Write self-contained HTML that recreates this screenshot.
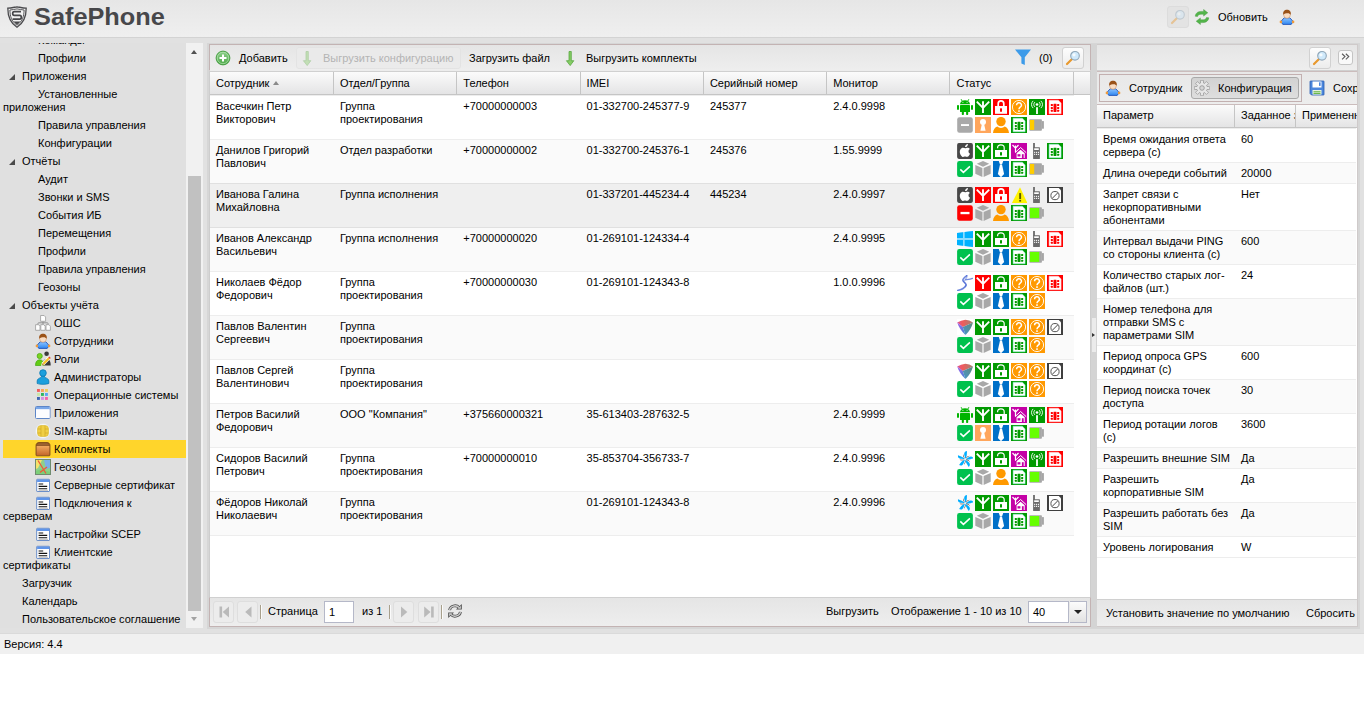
<!DOCTYPE html>
<html lang="ru"><head><meta charset="utf-8"><title>SafePhone</title>
<style>
html,body{margin:0;padding:0;background:#fff;overflow:hidden}
body{width:1366px;height:728px;position:relative;font-family:"Liberation Sans",sans-serif;font-size:11px;line-height:13px;color:#000}
*{box-sizing:border-box}
.abs{position:absolute}
.i16{width:16px;height:16px;display:inline-block;overflow:hidden;vertical-align:top}
.txt{white-space:nowrap;line-height:13px}
#hdr{position:absolute;left:0;top:0;width:1364px;height:38px;background:linear-gradient(#e6e6e6,#efefef);border-bottom:1px solid #d3d3d3;z-index:2}
#logo{position:absolute;left:7px;top:6px}
#brand{position:absolute;left:34px;top:2px;font-weight:bold;font-size:24px;line-height:30px;color:#47474a;white-space:nowrap;transform:scaleX(1.055);transform-origin:0 0}
#main{position:absolute;left:0;top:37px;width:1364px;height:596px;background:#e1e1e1}
#frame{position:absolute;left:207px;top:6px;width:1153px;height:586px;background:#d6d6d6}
#tree{position:absolute;left:0;top:6px;width:186px;height:585px;overflow:hidden;background:#e0e0e0}
#tree .tn:first-child{margin-top:-12px}
.tn{margin-left:3px;padding:3px 0 2px 0;line-height:13px;white-space:nowrap;margin-right:0}
.tn.sel{background:#ffd52b}
.sp{display:inline-block;width:16px;height:16px;margin:-2px 0 -1px;vertical-align:top;position:relative}
.ti{margin:-2px 0 -1px;vertical-align:top}
.tt{padding-left:3px;white-space:pre}
.tt.clip{display:inline-block;vertical-align:top;max-width:124px;overflow:hidden;height:13px}
.exp{position:absolute;left:6px;top:6px;width:0;height:0;border-style:solid;border-width:0 0 6px 6px;border-color:transparent transparent #4a4a4a transparent}
#tscroll{position:absolute;left:186px;top:6px;width:17px;height:585px;background:#f1f1f1}
#tscroll .thumb{position:absolute;left:2px;top:133px;width:13px;height:435px;background:#c1c1c1}
#tscroll .up{position:absolute;left:5px;top:7px;border:solid transparent;border-width:0 3.5px 4px;border-bottom-color:#505050}
#tscroll .down{position:absolute;left:5px;top:574px;border:solid transparent;border-width:4px 3.5px 0;border-top-color:#a3a3a3}

#center{position:absolute;left:209px;top:7px;width:882px;height:583px;background:#fff;border:1px solid #cdcdcd}
#right{position:absolute;left:1097px;top:7px;width:261px;height:583px;background:#fff;border:1px solid #cfcaca;border-left:0;overflow:hidden}
#split{position:absolute;left:1091px;top:7px;width:6px;height:584px;background:#d4d4d4}
#split b{position:absolute;left:1px;top:274px;width:4px;height:34px;background:#ebebeb}
#split i{position:absolute;left:1px;top:289px;border:solid transparent;border-width:2.5px 0 2.5px 3px;border-left-color:#333}

.tb{position:absolute;left:0;width:100%;background:linear-gradient(#e5e5e5,#eee)}
#ctb{top:-1px;left:-1px;width:882px;height:27px;border:1px solid #c3b3b3;border-bottom-color:#ececec}
.btn{position:absolute;width:22px;height:22px;border:1px solid #d1d1d1;border-radius:3px;background:linear-gradient(#fdfdfd,#ececec);padding:2px}
.btn.dis{background:#e3e3e3;border-color:#dcdcdc}
.dbtn{border:1px solid #e3e3e3;border-radius:3px;background:#ebebeb;opacity:.9}
.pbtn{position:absolute;border:1px solid #a9a9a9;border-radius:3px;background:linear-gradient(#d2d2d2,#dedede)}
.cbtn{position:absolute;width:15px;height:15px;border:1px solid #c4c4c4;border-radius:3px;background:#f9f9f9}
.cbtn span{position:relative;top:-1px}

.gh{position:absolute;left:0;width:100%;height:24px;background:linear-gradient(#fbfbfb,#e4e4e5);border-bottom:1px solid #c5c5c5;white-space:nowrap;overflow:hidden;font-size:0}
#cgh{top:26px;border-top:1px solid #d0d0d0}
.hc{display:inline-block;vertical-align:top;width:123.286px;height:23px;border-right:1px solid #c5c5c5;padding:5px 0 0 6px;font-size:11px;line-height:13px;overflow:hidden;white-space:nowrap;position:relative}
#cgh .hc{width:123.3px}
.sort{display:inline-block;margin-left:4px;border:solid transparent;border-width:0 3.5px 4px;border-bottom-color:#8a8a8a;position:relative;top:-2px}
#cbody{position:absolute;left:0;top:50px;width:863.8px;height:504px}
.gr{height:44px;border-top:1px solid #ededed;display:flex;background:#fff}
.gr.alt{background:#fafafa}
.gr.hov{background:#efefef;border-top-color:#e0e0e0}
.gr.hov + .gr{border-top-color:#e0e0e0}
.gr:last-child{border-bottom:1px solid #ededed;height:45px}
.gc{width:123.3px;flex:none;padding:4px 0 0 6px;line-height:13px;overflow:hidden;white-space:nowrap}
.gc:first-child{width:124px}
.gc.st{padding:3px 0 0 6.5px;font-size:0;line-height:0}
.si{margin:0 2px 2px 0}
#cbb{top:552px;left:-1px;width:882px;height:30px;border:1px solid #c3b3b3;border-top-color:#d0d0d0}
.pgb{position:absolute;top:3px;width:21px;height:22px;padding:2px 1.5px;border:1px solid #dedede;border-radius:3px;background:#ececec}
.sep{position:absolute;top:7px;width:2px;height:14px;border-left:1px solid #a8a08c;border-right:1px solid #fbfbfb}
.inp{position:absolute;height:22px;border:1px solid #b5b8c8;background:#fff;padding:4px 0 0 4px;line-height:13px;font-size:11px}
.trig{position:absolute;width:17px;height:22px;border:1px solid #b5b8c8;border-left:0;background:linear-gradient(#fcfcfc,#e2e2e2)}
.trig i{position:absolute;left:4px;top:8px;border:solid transparent;border-width:4px 4px 0;border-top-color:#222}

#rtb{top:0;height:26px;border-bottom:1px solid #d0d0d0}
#rtabs{top:26px;height:34px;border:1px solid #cbbcbc;border-left:0;border-right:0;background:linear-gradient(#e8e8e8,#ededed)}
#tabgrp{position:absolute;left:2px;top:2px;width:203px;height:28px;border:1px solid #c3b0b0}
#rgh{top:60px;height:23px}
#rgh .hc{height:22px;padding-top:4px}
#rbody{position:absolute;left:0;top:83px;width:259px}
.pr{display:flex;border-top:1px solid #ededed;background:#fff}
.pr.alt{background:#fafafa}
.pr:last-child{border-bottom:1px solid #ededed}
.pc{flex:none;padding:4px 0 3px 6px;line-height:13px;white-space:nowrap;overflow:hidden}
.p1{width:138px}.p2{width:61px}.p3{width:61px}
#rbb{top:554px;height:27px;border-top:1px solid #d0d0d0}
#status{position:absolute;left:0;top:633px;width:1364px;height:21px;background:#f0f0f0;border-top:1px solid #dadada;padding:4px 0 0 4px;line-height:13px}

</style></head>
<body>
<svg width="0" height="0" style="position:absolute"><defs>
<symbol id="s-android" viewBox="0 0 16 16"><g fill="#00b400"><path d="M3 5.2a5 3.9 0 0 1 10 0z"/><rect x="3" y="6.1" width="10" height="6.9" rx=".6"/><rect x="0" y="5.9" width="2" height="5" rx=".8"/><rect x="14" y="5.9" width="2" height="5" rx=".8"/><rect x="4.8" y="12" width="2.1" height="4" rx=".7"/><rect x="9.1" y="12" width="2.1" height="4" rx=".7"/><path d="M4.2 0.1l1.6 2-.6.4-1.6-2zM11.8.1l-1.6 2 .6.4 1.6-2z"/></g><circle cx="5.9" cy="3.2" r=".55" fill="#fff"/><circle cx="10.1" cy="3.2" r=".55" fill="#fff"/></symbol>
<symbol id="s-ant-g" viewBox="0 0 16 16"><rect width="16" height="16" fill="#019a01"/><path d="M8 2.2V14M1.8 2.6L8 8.8 14.2 2.6" stroke="#fff" stroke-width="1.9" fill="none"/></symbol>
<symbol id="s-ant-r" viewBox="0 0 16 16"><rect width="16" height="16" fill="#ff0000"/><path d="M8 2.2V14M1.8 2.6L8 8.8 14.2 2.6" stroke="#fff" stroke-width="1.9" fill="none"/></symbol>
<symbol id="s-lock-r" viewBox="0 0 16 16"><rect width="16" height="16" fill="#ff0000"/><path d="M5.2 7.5V4.8a2.8 2.9 0 0 1 5.6 0V7.5" stroke="#fff" stroke-width="1.7" fill="none"/><rect x="2" y="7" width="12" height="7.8" fill="#fff"/><rect x="7" y="9.2" width="2" height="3.5" rx=".5" fill="#ff0000"/></symbol>
<symbol id="s-unlock" viewBox="0 0 16 16"><rect width="16" height="16" fill="#019a01"/><path d="M4.6 5.2V4.8a3.3 2.9 0 0 1 6.6 0V7.5" stroke="#fff" stroke-width="1.2" fill="none"/><rect x="2" y="7" width="12" height="7" fill="#fff"/><rect x="7" y="9" width="2" height="3.6" rx=".4" fill="#019a01"/></symbol>
<symbol id="s-q" viewBox="0 0 16 16"><rect width="16" height="16" fill="#ff9900"/><circle cx="8" cy="8" r="6.6" fill="none" stroke="#fff" stroke-width=".9"/><path d="M5.6 6.2a2.4 2.3 0 1 1 3.6 1.9c-.9.6-1.2 1-1.2 2.2" stroke="#fff" stroke-width="1.5" fill="none"/><rect x="7.2" y="11.3" width="1.6" height="1.6" fill="#fff"/></symbol>
<symbol id="s-tower" viewBox="0 0 16 16"><rect width="16" height="16" fill="#019a01"/><g stroke="#fff" fill="none" stroke-width=".9"><path d="M5.9 3.1a3.2 3.2 0 0 0 0 4.8M10.1 3.1a3.2 3.2 0 0 1 0 4.8M4.1 1.9a5.4 5.4 0 0 0 0 7.2M11.9 1.9a5.4 5.4 0 0 1 0 7.2"/></g><circle cx="8" cy="5.5" r="1.35" fill="#fff"/><rect x="7.1" y="8.2" width="1.8" height="6.8" fill="#fff"/></symbol>
<symbol id="s-sim-r" viewBox="0 0 16 16"><rect width="16" height="16" fill="#ff0000"/><path d="M2.1 1.2h9.3L14.1 4V14.8H2.1z" fill="#fff" stroke="#ffd0d0" stroke-width=".5"/><g fill="#ff0000"><rect x="6.5" y="4.7" width="3" height="8.3" rx=".4"/><rect x="3.8" y="5.1" width="2.1" height="2" rx=".5"/><rect x="3.8" y="7.9" width="2.1" height="2" rx=".5"/><rect x="3.8" y="10.7" width="2.1" height="2" rx=".5"/><rect x="10.1" y="5.1" width="2.1" height="2" rx=".5"/><rect x="10.1" y="7.9" width="2.1" height="2" rx=".5"/><rect x="10.1" y="10.7" width="2.1" height="2" rx=".5"/></g></symbol>
<symbol id="s-sim-g" viewBox="0 0 16 16"><rect width="16" height="16" fill="#019a01"/><path d="M2.1 1.2h9.3L14.1 4V14.8H2.1z" fill="#fff" stroke="#7ff0d8" stroke-width=".5"/><g fill="#019a01"><rect x="6.5" y="4.7" width="3" height="8.3" rx=".4"/><rect x="3.8" y="5.1" width="2.1" height="2" rx=".5"/><rect x="3.8" y="7.9" width="2.1" height="2" rx=".5"/><rect x="3.8" y="10.7" width="2.1" height="2" rx=".5"/><rect x="10.1" y="5.1" width="2.1" height="2" rx=".5"/><rect x="10.1" y="7.9" width="2.1" height="2" rx=".5"/><rect x="10.1" y="10.7" width="2.1" height="2" rx=".5"/></g></symbol>
<symbol id="s-nosim" viewBox="0 0 16 16"><rect width="16" height="16" fill="#3f3f3f"/><path d="M2 1h9.8L14 3.2V15H2z" fill="#fff"/><circle cx="8" cy="8.6" r="4.1" fill="none" stroke="#555" stroke-width="1"/><path d="M5.3 11.3l5.4-5.4" stroke="#444" stroke-width="1"/></symbol>
<symbol id="s-minus-gray" viewBox="0 0 16 16"><rect x=".2" y=".2" width="15.6" height="15.6" rx="2.2" fill="#a9a9a9"/><rect x="4" y="7.1" width="8" height="1.9" fill="#fff"/></symbol>
<symbol id="s-minus-red" viewBox="0 0 16 16"><rect x=".2" y=".2" width="15.6" height="15.6" rx="2.2" fill="#ff0000"/><rect x="3.5" y="6.9" width="9" height="2.3" fill="#fff"/></symbol>
<symbol id="s-key" viewBox="0 0 16 16"><rect width="16" height="16" fill="#ffa65c"/><circle cx="8" cy="5" r="3" fill="#fff"/><path d="M7 6.5h2l1.6 7.2H5.4z" fill="#fff"/></symbol>
<symbol id="s-person" viewBox="0 0 16 16"><circle cx="8" cy="4.6" r="4.7" fill="#ff9900"/><path d="M0 16c.3-3.5 2-5.6 4.3-6.4 1 .9 2.2 1.3 3.7 1.3s2.7-.4 3.7-1.3C14 10.4 15.7 12.5 16 16z" fill="#ff9900"/></symbol>
<symbol id="s-bat-y" viewBox="0 0 16 16"><rect x=".3" y="2.2" width="12.6" height="11.5" rx=".8" fill="#a6a6a6"/><rect x="12.8" y="4.1" width="2.1" height="7.6" fill="#a6a6a6"/><rect x="1" y="3" width="4.2" height="9.9" fill="#ffcc00"/></symbol>
<symbol id="s-bat-g" viewBox="0 0 16 16"><rect x=".3" y="2.2" width="12.6" height="11.5" rx=".8" fill="#a6a6a6"/><rect x="12.8" y="4.1" width="2.1" height="7.6" fill="#a6a6a6"/><rect x="1" y="3" width="9.2" height="9.9" fill="#66ff00"/></symbol>
<symbol id="s-apple" viewBox="0 0 16 16"><rect x=".1" y=".1" width="15.8" height="15.8" rx="1.8" fill="#474747"/><path d="M10.9 1c.1.9-.3 1.7-.8 2.2-.5.6-1.3 1-2 .9-.1-.8.3-1.6.8-2.1.5-.6 1.4-1 2-1zM13 10.7c-.4.8-.5 1.2-1 1.9-.6 1-1.5 1.4-2.1 1.4-.7 0-1-.4-1.9-.4s-1.2.4-1.9.4c-.8 0-1.5-.6-2.1-1.5C2.6 10.6 2.4 7.8 3.4 6.4c.6-1 1.7-1.6 2.6-1.6s1.5.5 2.3.5c.7 0 1.2-.5 2.3-.5.8 0 1.7.5 2.3 1.2-2 1.1-1.7 4 .1 4.7z" fill="#fff"/></symbol>
<symbol id="s-home" viewBox="0 0 16 16"><rect width="16" height="16" fill="#c400a6"/><path d="M4.5 2.5V9.2M1.5 2l3 3.2L7.5 2" stroke="#fff" stroke-width="1.2" fill="none"/><path d="M4 9.7L9.6 4.5 15.2 9.7" stroke="#fff" stroke-width="1" fill="none"/><path d="M5.6 15V10.3L9.6 6.7l4.1 3.6V15z" fill="#fff"/><rect x="6.5" y="11.2" width="2.9" height="2.3" fill="#c400a6"/><rect x="10.9" y="11.2" width="1.8" height="3.8" fill="#c400a6"/></symbol>
<symbol id="s-phone" viewBox="0 0 16 16"><g fill="#6a6a6a"><rect x="4.1" y="0" width="1.8" height="5"/><rect x="4.1" y="4.2" width="6.8" height="11.7" rx=".5"/></g><rect x="5.2" y="5.3" width="4.6" height="1.7" fill="#fff"/><g fill="#fff"><rect x="5.1" y="8.8" width="1.1" height="1.1"/><rect x="7" y="8.8" width="1.1" height="1.1"/><rect x="8.9" y="8.8" width="1.1" height="1.1"/><rect x="5.1" y="10.8" width="1.1" height="1.1"/><rect x="7" y="10.8" width="1.1" height="1.1"/><rect x="8.9" y="10.8" width="1.1" height="1.1"/></g></symbol>
<symbol id="s-check" viewBox="0 0 16 16"><rect x=".1" y=".1" width="15.8" height="15.8" rx="2.2" fill="#00c14e"/><path d="M3.3 8.4l3.1 3 6.5-6" stroke="#fff" stroke-width="1.5" fill="none"/></symbol>
<symbol id="s-cube" viewBox="0 0 16 16"><g fill="#a8a8a8"><path d="M8 0l6.2 2.8L8 5.8 1.8 2.8z"/><path d="M.3 3.9l7.1 3.1v9L.3 12.8z"/><path d="M15.7 3.9L8.6 7v9l7.1-3.2z"/></g></symbol>
<symbol id="s-tie" viewBox="0 0 16 16"><rect width="16" height="16" fill="#0070c8"/><path d="M5.8 0h4.4L9.1 3.3H6.9z" fill="#fff"/><path d="M7 3.5h2l2.1 9.6L8 16.3l-3.1-3.2z" fill="#fff"/></symbol>
<symbol id="s-warn" viewBox="0 0 16 16"><path d="M9 .3l7.3 15.7H.9z" fill="#fff200"/><rect x="8.2" y="6.1" width="1.9" height="6" fill="#5a5a00"/><rect x="8.2" y="13" width="1.9" height="1.6" fill="#5a5a00"/></symbol>
<symbol id="s-win" viewBox="0 0 16 16"><path d="M0 2.1L16 0v16L0 13.9z" fill="#8adcff"/><g fill="#00b2ff"><path d="M0 2.1l6-.8V7H0z"/><path d="M7.7 1.1L16 0v7H7.7z"/><path d="M0 9h6v5.7l-6-.8z"/><path d="M7.7 9H16v7l-8.3-1.1z"/></g></symbol>
<symbol id="s-sail" viewBox="0 0 16 16"><g fill="none" stroke="#3a5bd0" stroke-linecap="round"><path d="M.5 15.5c3.5-.6 7-2.6 8.4-5 .9-1.7-.6-2.7-2.4-4C5 5.3 6 3.3 9.8.6" stroke-width="1.5" opacity=".75"/><path d="M9.8.6C10.5 2 9.5 3.7 7.5 5c-1.5 1-1 2.2.7 3.5 1.3 1 1.3 2.3.2 3.6" stroke-width="1" opacity=".6"/><path d="M8.5 4.8c2.3-.3 5-.5 7-1.4" stroke-width="1.3" opacity=".7"/></g></symbol>
<symbol id="s-shield" viewBox="0 0 16 16"><defs><linearGradient id="shl" x1="0" y1="0" x2=".7" y2="1"><stop offset="0" stop-color="#9a3fe6"/><stop offset=".5" stop-color="#5a55dd"/><stop offset="1" stop-color="#1d62c8"/></linearGradient><linearGradient id="shr" x1="1" y1="0" x2="0" y2="1"><stop offset="0" stop-color="#3f7060"/><stop offset="1" stop-color="#1d7fc0"/></linearGradient><linearGradient id="sht" x1="0" y1="0" x2="1" y2="0"><stop offset="0" stop-color="#d8307a"/><stop offset=".35" stop-color="#ee3838"/><stop offset="1" stop-color="#8a6a55"/></linearGradient></defs><rect width="16" height="16" fill="#fff"/><g opacity=".82"><path d="M.2 3.6Q4 1 8.4.7 12.5 1 16 3.5L5.8 8z" fill="url(#sht)"/><path d="M.2 3.6L5.8 8l2.7 8Q2.6 11 .2 3.6z" fill="url(#shl)"/><path d="M5.8 8L16 3.5Q14 11 8.5 16z" fill="url(#shr)"/></g></symbol>
<symbol id="s-tizen" viewBox="0 0 16 16"><g transform="rotate(0 8.3 8.3)"><path d="M8.3 8.3c-.2-2.7-1.6-4.3-1-6.2.4-1.2 1.6-1.9 2.7-2 -.3 2.8.3 5-1.7 8.2z" fill="#00aeff"/><path d="M8.3 8.3c-1.2-1.6-2.8-2.7-2.1-5.4.2 2.2 1 3.5 2.1 5.4z" fill="#250a05"/></g><g transform="rotate(72 8.3 8.3)"><path d="M8.3 8.3c-.2-2.7-1.6-4.3-1-6.2.4-1.2 1.6-1.9 2.7-2 -.3 2.8.3 5-1.7 8.2z" fill="#00aeff"/><path d="M8.3 8.3c-1.2-1.6-2.8-2.7-2.1-5.4.2 2.2 1 3.5 2.1 5.4z" fill="#250a05"/></g><g transform="rotate(144 8.3 8.3)"><path d="M8.3 8.3c-.2-2.7-1.6-4.3-1-6.2.4-1.2 1.6-1.9 2.7-2 -.3 2.8.3 5-1.7 8.2z" fill="#00aeff"/><path d="M8.3 8.3c-1.2-1.6-2.8-2.7-2.1-5.4.2 2.2 1 3.5 2.1 5.4z" fill="#250a05"/></g><g transform="rotate(216 8.3 8.3)"><path d="M8.3 8.3c-.2-2.7-1.6-4.3-1-6.2.4-1.2 1.6-1.9 2.7-2 -.3 2.8.3 5-1.7 8.2z" fill="#00aeff"/><path d="M8.3 8.3c-1.2-1.6-2.8-2.7-2.1-5.4.2 2.2 1 3.5 2.1 5.4z" fill="#250a05"/></g><g transform="rotate(288 8.3 8.3)"><path d="M8.3 8.3c-.2-2.7-1.6-4.3-1-6.2.4-1.2 1.6-1.9 2.7-2 -.3 2.8.3 5-1.7 8.2z" fill="#00aeff"/><path d="M8.3 8.3c-1.2-1.6-2.8-2.7-2.1-5.4.2 2.2 1 3.5 2.1 5.4z" fill="#250a05"/></g><circle cx="8.3" cy="8.3" r="1" fill="#fff" opacity=".8"/></symbol>
<symbol id="magnifier" viewBox="0 0 16 16"><path d="M6.8 9.2L2 14" stroke="#e8992e" stroke-width="2.2" stroke-linecap="round"/><circle cx="10" cy="5.8" r="4.3" fill="#cfe9fb" stroke="#8fa6b8" stroke-width="1.1"/><circle cx="9" cy="4.8" r="1.6" fill="#fff" opacity=".8"/></symbol>
<symbol id="refresh-g" viewBox="0 0 16 16"><g fill="#53b54a" stroke="#3d9636" stroke-width=".4"><path d="M1.2 7.2C1.5 4 4 2.4 7 2.4h2.6V.5l4.2 3.3-4.2 3.3V5.2H7c-1.7 0-3 .7-3.5 2.3z"/><path d="M14.8 8.8c-.3 3.2-2.8 4.8-5.8 4.8H6.4v1.9L2.2 12.2l4.2-3.3v1.9H9c1.7 0 3-.7 3.5-2.3z"/></g></symbol>
<symbol id="t-user" viewBox="0 0 16 16"><defs><linearGradient id="ubg" x1="0" y1="0" x2="0" y2="1"><stop offset="0" stop-color="#8cc4ff"/><stop offset="1" stop-color="#2f86f0"/></linearGradient></defs><path d="M5.2 8.8h5.6l3.4 3.7-2 2.9H3.8l-2-2.9z" fill="url(#ubg)" stroke="#2255b8" stroke-width=".9" stroke-linejoin="round"/><circle cx="1.9" cy="12.9" r="1.3" fill="#f09a3a"/><circle cx="14.1" cy="12.9" r="1.3" fill="#f09a3a"/><ellipse cx="8" cy="5.7" rx="3.4" ry="3.6" fill="#f9dcc2" stroke="#c98a5a" stroke-width=".5"/><path d="M4.3 5.8C3.7 2.6 5.5.8 8 .8s4.3 1.8 3.7 5C11 4.7 10 4.2 8.8 4.2 7.2 4.2 5.2 4.6 4.3 5.8z" fill="#9a5218"/></symbol>
<symbol id="add" viewBox="0 0 16 16"><defs><linearGradient id="adg" x1="0" y1="0" x2="0" y2="1"><stop offset="0" stop-color="#8fd08c"/><stop offset="1" stop-color="#4aa846"/></linearGradient></defs><circle cx="8" cy="8" r="6.9" fill="url(#adg)" stroke="#3f9a3b" stroke-width=".9"/><circle cx="8" cy="8" r="5.7" fill="none" stroke="#b6e3b3" stroke-width=".7"/><path d="M8 4.5v7M4.5 8h7" stroke="#fff" stroke-width="2"/></symbol>
<symbol id="arrow-down" viewBox="0 0 16 16"><path d="M6 .5h2.3v9.2h2.5L7.2 14.6 3.4 9.7H6z" fill="#86cc66" stroke="#4aa032" stroke-width=".7"/></symbol>
<symbol id="funnel" viewBox="0 0 16 16"><path d="M0 .6h16L9.8 8.2v7.8L6.4 14.5V8.2z" fill="#3d9be9"/></symbol>
<symbol id="pg-first" viewBox="0 0 16 16"><rect x="3.5" y="2.5" width="2.6" height="11" fill="#777"/><path d="M13 2.5v11L6.7 8z" fill="#777"/></symbol>
<symbol id="pg-prev" viewBox="0 0 16 16"><path d="M11.5 2.5v11L5.2 8z" fill="#777"/></symbol>
<symbol id="pg-next" viewBox="0 0 16 16"><path d="M5 2.5v11L11.3 8z" fill="#777"/></symbol>
<symbol id="pg-last" viewBox="0 0 16 16"><rect x="10.1" y="2.5" width="2.6" height="11" fill="#777"/><path d="M3.2 2.5v11L9.5 8z" fill="#777"/></symbol>
<symbol id="pg-refresh" viewBox="0 0 16 16"><path d="M2.6 7.2a5.4 4.8 0 0 1 9.6-2.6M13.4 8.8a5.4 4.8 0 0 1-9.6 2.6" fill="none" stroke="#505050" stroke-width="2.8"/><path d="M14.8 1v5.6H9z" fill="#505050"/><path d="M1.2 15V9.4H7z" fill="#505050"/><path d="M2.6 7.2a5.4 4.8 0 0 1 9.6-2.6M13.4 8.8a5.4 4.8 0 0 1-9.6 2.6" fill="none" stroke="#d0d0d0" stroke-width="1.3"/><path d="M13.9 2.8v3H10.8z" fill="#d0d0d0"/><path d="M2.1 13.2v-3H5.2z" fill="#d0d0d0"/></symbol>
<symbol id="gear" viewBox="0 0 16 16"><g fill="#e6e6e6" stroke="#8a8a8a" stroke-width=".7"><rect x="6.5" y=".4" width="3" height="3.4" rx=".5" transform="rotate(0 8 8)"/><rect x="6.5" y=".4" width="3" height="3.4" rx=".5" transform="rotate(45 8 8)"/><rect x="6.5" y=".4" width="3" height="3.4" rx=".5" transform="rotate(90 8 8)"/><rect x="6.5" y=".4" width="3" height="3.4" rx=".5" transform="rotate(135 8 8)"/><rect x="6.5" y=".4" width="3" height="3.4" rx=".5" transform="rotate(180 8 8)"/><rect x="6.5" y=".4" width="3" height="3.4" rx=".5" transform="rotate(225 8 8)"/><rect x="6.5" y=".4" width="3" height="3.4" rx=".5" transform="rotate(270 8 8)"/><rect x="6.5" y=".4" width="3" height="3.4" rx=".5" transform="rotate(315 8 8)"/><circle cx="8" cy="8" r="5.2"/></g><g fill="#e6e6e6"><rect x="6.85" y=".75" width="2.3" height="3.4" transform="rotate(0 8 8)"/><rect x="6.85" y=".75" width="2.3" height="3.4" transform="rotate(45 8 8)"/><rect x="6.85" y=".75" width="2.3" height="3.4" transform="rotate(90 8 8)"/><rect x="6.85" y=".75" width="2.3" height="3.4" transform="rotate(135 8 8)"/><rect x="6.85" y=".75" width="2.3" height="3.4" transform="rotate(180 8 8)"/><rect x="6.85" y=".75" width="2.3" height="3.4" transform="rotate(225 8 8)"/><rect x="6.85" y=".75" width="2.3" height="3.4" transform="rotate(270 8 8)"/><rect x="6.85" y=".75" width="2.3" height="3.4" transform="rotate(315 8 8)"/><circle cx="8" cy="8" r="4.85"/></g><circle cx="8" cy="8" r="2.3" fill="#d6d6d6" stroke="#8a8a8a" stroke-width=".7"/></symbol>
<symbol id="save" viewBox="0 0 16 16"><path d="M1 1.5A.5.5 0 0 1 1.5 1h13a.5.5 0 0 1 .5.5v13a.5.5 0 0 1-.5.5h-12L1 13.5z" fill="#4b86dd" stroke="#2a5db0" stroke-width=".8"/><rect x="3.5" y="1.5" width="9" height="6" fill="#fff"/><rect x="10" y="2.3" width="1.6" height="3.6" fill="#4b86dd"/><rect x="3.5" y="10" width="9" height="4.6" fill="#e9f3e2"/><rect x="4.5" y="11.2" width="7" height="1.2" fill="#6cb84c"/><rect x="4.5" y="13" width="7" height="1" fill="#6cb84c"/></symbol>
<symbol id="t-org" viewBox="0 0 16 16"><path d="M8 6.4v1.4M3 9.6V8.3a.6.6 0 0 1 .6-.5h8.8a.6.6 0 0 1 .6.5v1.3M8 7.8v1.8" fill="none" stroke="#8a8a8a" stroke-width=".9"/><path d="M5.6 0.5h3.5l1.5 1.5v4.3h-5z" fill="#fff" stroke="#9a9a9a" stroke-width=".8"/><path d="M0.6 9.7h2.9000000000000004l1.5 1.5v4.1h-4.4z" fill="#fff" stroke="#9a9a9a" stroke-width=".8"/><path d="M5.8 9.7h2.9000000000000004l1.5 1.5v4.1h-4.4z" fill="#fff" stroke="#9a9a9a" stroke-width=".8"/><path d="M11 9.7h2.9000000000000004l1.5 1.5v4.1h-4.4z" fill="#fff" stroke="#9a9a9a" stroke-width=".8"/></symbol>
<symbol id="t-roles" viewBox="0 0 16 16"><circle cx="11.6" cy="2.7" r="2.3" fill="#3a3a3a"/><path d="M7.5 14.5c0-4 1.5-6.5 4.1-6.5s4.1 2 4.1 6.5z" fill="#3a3a3a"/><circle cx="4.7" cy="5" r="2.6" fill="#7ed321" stroke="#3fa60f" stroke-width=".7"/><path d="M.5 14.5c0-3.6 1.4-5.7 4.2-5.7s4.2 2.1 4.2 5.7z" fill="#63cc14" stroke="#3fa60f" stroke-width=".7"/><path d="M6 15l1-3.4L13.2 5.4l2.4 2.4L9.4 14z" fill="#fff"/><path d="M7.6 12l5.6-5.6 1.6 1.6L9.2 13.6z" fill="#f7c325"/><path d="M13.2 6.4l1-1 1.6 1.6-1 1z" fill="#e2402a"/><path d="M6.6 14.6l1-2.6 1.6 1.6z" fill="#c98a3a"/></symbol>
<symbol id="t-admin" viewBox="0 0 16 16"><g fill="#1b9fdd" stroke="#0a78b4" stroke-width=".8"><path d="M2.2 14.5V12c0-1.7 1.5-2.7 3.8-3.5.6-.3.6-1 .1-1.7h3.8c-.5.7-.5 1.4.1 1.7 2.3.8 3.8 1.8 3.8 3.5v2.5c-1.5.6-3.5.8-5.8.8s-4.3-.2-5.8-.8z"/><circle cx="8" cy="4" r="3.3"/></g></symbol>
<symbol id="t-os" viewBox="0 0 16 16"><rect x="2" y="2" width="2.9" height="2.9" fill="#f25c5c"/><rect x="6" y="2" width="2.9" height="2.9" fill="#f7a258"/><rect x="10" y="2" width="2.9" height="2.9" fill="#f0cd58"/><rect x="2" y="6" width="2.9" height="2.9" fill="#c8e6a6"/><rect x="6" y="6" width="2.9" height="2.9" fill="#2fb65c"/><rect x="10" y="6" width="2.9" height="2.9" fill="#58a6f0"/><rect x="2" y="10" width="2.9" height="2.9" fill="#3e66b2"/><rect x="6" y="10" width="2.9" height="2.9" fill="#d190e0"/><rect x="10" y="10" width="2.9" height="2.9" fill="#f762aa"/></symbol>
<symbol id="t-app" viewBox="0 0 16 16"><rect x=".5" y="1.5" width="14.5" height="12" rx="1" fill="#fff" stroke="#5d86c8" stroke-width="1"/><rect x="1" y="2" width="13.5" height="2.4" fill="#7aa7e8"/><rect x="1" y="4.4" width="13.5" height="8.6" fill="#fbfcff"/></symbol>
<symbol id="t-sim" viewBox="0 0 16 16"><circle cx="8" cy="8" r="7.6" fill="#f4f6f8" stroke="#dfe3e8" stroke-width=".6"/><rect x="2.5" y="2.5" width="11" height="11" rx="3.5" fill="#f0cf45" stroke="#d9b52c" stroke-width=".6"/><path d="M6 2.8v10.4M10 2.8v10.4M2.8 6h3.2M2.8 10h3.2M10 6h3.2M10 10h3.2" stroke="#cfa523" stroke-width=".6" fill="none"/></symbol>
<symbol id="t-box" viewBox="0 0 16 16"><defs><linearGradient id="bxg" x1="0" y1="0" x2="0" y2="1"><stop offset="0" stop-color="#f0a860"/><stop offset="1" stop-color="#c4682a"/></linearGradient></defs><path d="M1 4.5c0-2 1.5-3 3-3h8c1.5 0 3 1 3 3V14a.8.8 0 0 1-.8.8H1.8A.8.8 0 0 1 1 14z" fill="#8a5424" stroke="#7a4518" stroke-width=".8"/><rect x="1.6" y="5" width="12.8" height="9.3" fill="url(#bxg)"/><path d="M2 4.6c.3-1.6 1.2-2.4 2.5-2.4h7c1.3 0 2.2.8 2.5 2.4z" fill="#9c6330"/></symbol>
<symbol id="t-map" viewBox="0 0 16 16"><rect x=".5" y=".5" width="15" height="15" fill="#8fd08a" stroke="#6f8c6f" stroke-width="1"/><path d="M1 1h6L3 9 1 10z" fill="#f4e36a"/><path d="M9 1h6v8l-4 1z" fill="#7ab0e8"/><path d="M1 12l5-2 9 3v2H1z" fill="#7ccf78"/><path d="M3 1.5l8 13M12 8L5 13.5" stroke="#f0583a" stroke-width="1.3" fill="none"/></symbol>
<symbol id="t-cert" viewBox="0 0 16 16"><rect x="1.7" y="2.3" width="12.8" height="12.2" rx=".5" fill="#fff" stroke="#5a82c4" stroke-width=".9"/><rect x="2.1" y="2.7" width="12" height="2.3" fill="#5f95ea"/><path d="M3.6 7h4.6M3.6 9.4h8.6M3.6 11.8h4.6M6.5 11.8h5.7" stroke="#111" stroke-width="1.1"/><path d="M3.6 13.4h9.4" stroke="#9a9a9a" stroke-width=".6"/></symbol>
<symbol id="logo-shield" viewBox="0 0 20 22"><path d="M10 .8C7 1.3 4 2 .8 2.2c0 7 1.2 14 9.2 19 8-5 9.2-12 9.2-19C16 2 13 1.3 10 .8z" fill="#f2f2f2" stroke="#4a4a4d" stroke-width="1.3"/><path d="M10 2.9C7.7 3.3 5.4 3.8 2.9 4c.1 5.7 1.3 11.2 7.1 15.2 5.8-4 7-9.5 7.1-15.2-2.5-.2-4.8-.7-7.1-1.1z" fill="none" stroke="#4a4a4d" stroke-width=".9"/><path d="M14 5.7H7.2c-2 0-2 3.7 0 3.7h5.6c2 0 2 3.8 0 3.8H5.6" fill="none" stroke="#47474a" stroke-width="1.7"/><path d="M6.4 15.4h7.2L10 18.5z" fill="#47474a"/></symbol>

</defs></svg>

<div id="hdr">
  <svg id="logo" viewBox="0 0 20 22" width="20" height="22"><use href="#logo-shield"/></svg>
  <div id="brand">SafePhone</div>
  <div class="btn dis" style="left:1167px;top:6px"><svg class="i16" style="opacity:.42"><use href="#magnifier"/></svg></div>
  <svg class="i16 abs" style="left:1194px;top:9px"><use href="#refresh-g"/></svg>
  <div class="txt abs" style="left:1218px;top:11px">Обновить</div>
  <svg class="i16 abs" style="left:1279px;top:9px"><use href="#t-user"/></svg>
</div>

<div id="main">
  <div id="frame"></div>
  <div id="tree">
<div class="tn"><span class="sp"></span><span class="sp"></span><span class="tt">Команды</span></div>
<div class="tn"><span class="sp"></span><span class="sp"></span><span class="tt">Профили</span></div>
<div class="tn"><span class="sp"><i class="exp"></i></span><span class="tt">Приложения</span></div>
<div class="tn"><span class="sp"></span><span class="sp"></span><span class="tt">Установленные<br>приложения</span></div>
<div class="tn"><span class="sp"></span><span class="sp"></span><span class="tt">Правила управления</span></div>
<div class="tn"><span class="sp"></span><span class="sp"></span><span class="tt">Конфигурации</span></div>
<div class="tn"><span class="sp"><i class="exp"></i></span><span class="tt">Отчёты</span></div>
<div class="tn"><span class="sp"></span><span class="sp"></span><span class="tt">Аудит</span></div>
<div class="tn"><span class="sp"></span><span class="sp"></span><span class="tt">Звонки и SMS</span></div>
<div class="tn"><span class="sp"></span><span class="sp"></span><span class="tt">События ИБ</span></div>
<div class="tn"><span class="sp"></span><span class="sp"></span><span class="tt">Перемещения</span></div>
<div class="tn"><span class="sp"></span><span class="sp"></span><span class="tt">Профили</span></div>
<div class="tn"><span class="sp"></span><span class="sp"></span><span class="tt">Правила управления</span></div>
<div class="tn"><span class="sp"></span><span class="sp"></span><span class="tt">Геозоны</span></div>
<div class="tn"><span class="sp"><i class="exp"></i></span><span class="tt">Объекты учёта</span></div>
<div class="tn"><span class="sp"></span><span class="sp"></span><svg class="i16 ti"><use href="#t-org"/></svg><span class="tt">ОШС</span></div>
<div class="tn"><span class="sp"></span><span class="sp"></span><svg class="i16 ti"><use href="#t-user"/></svg><span class="tt">Сотрудники</span></div>
<div class="tn"><span class="sp"></span><span class="sp"></span><svg class="i16 ti"><use href="#t-roles"/></svg><span class="tt">Роли</span></div>
<div class="tn"><span class="sp"></span><span class="sp"></span><svg class="i16 ti"><use href="#t-admin"/></svg><span class="tt">Администраторы</span></div>
<div class="tn"><span class="sp"></span><span class="sp"></span><svg class="i16 ti"><use href="#t-os"/></svg><span class="tt">Операционные системы</span></div>
<div class="tn"><span class="sp"></span><span class="sp"></span><svg class="i16 ti"><use href="#t-app"/></svg><span class="tt">Приложения</span></div>
<div class="tn"><span class="sp"></span><span class="sp"></span><svg class="i16 ti"><use href="#t-sim"/></svg><span class="tt">SIM-карты</span></div>
<div class="tn sel"><span class="sp"></span><span class="sp"></span><svg class="i16 ti"><use href="#t-box"/></svg><span class="tt">Комплекты</span></div>
<div class="tn"><span class="sp"></span><span class="sp"></span><svg class="i16 ti"><use href="#t-map"/></svg><span class="tt">Геозоны</span></div>
<div class="tn"><span class="sp"></span><span class="sp"></span><svg class="i16 ti"><use href="#t-cert"/></svg><span class="tt clip">Серверные сертификат</span></div>
<div class="tn"><span class="sp"></span><span class="sp"></span><svg class="i16 ti"><use href="#t-cert"/></svg><span class="tt">Подключения к<br>серверам</span></div>
<div class="tn"><span class="sp"></span><span class="sp"></span><svg class="i16 ti"><use href="#t-cert"/></svg><span class="tt">Настройки SCEP</span></div>
<div class="tn"><span class="sp"></span><span class="sp"></span><svg class="i16 ti"><use href="#t-cert"/></svg><span class="tt">Клиентские<br>сертификаты</span></div>
<div class="tn"><span class="sp"></span><span class="tt">Загрузчик</span></div>
<div class="tn"><span class="sp"></span><span class="tt">Календарь</span></div>
<div class="tn"><span class="sp"></span><span class="tt">Пользовательское соглашение</span></div>
  </div>
  <div id="tscroll"><i class="up"></i><i class="thumb"></i><i class="down"></i></div>

  <div id="center">
    <div class="tb" id="ctb">
      <svg class="i16 abs" style="left:5px;top:5px"><use href="#add"/></svg><span class="txt abs" style="left:29px;top:7px">Добавить</span>
      <div class="dbtn abs" style="left:86px;top:2px;width:165px;height:22px"></div>
      <svg class="i16 abs" style="left:90px;top:6px;opacity:.4"><use href="#arrow-down"/></svg><span class="txt abs" style="left:113px;top:7px;color:#b4b4b4">Выгрузить конфигурацию</span>
      <span class="txt abs" style="left:259px;top:7px">Загрузить файл</span>
      <svg class="i16 abs" style="left:353px;top:6px"><use href="#arrow-down"/></svg><span class="txt abs" style="left:376px;top:7px">Выгрузить комплекты</span>
      <svg class="i16 abs" style="left:805px;top:4px"><use href="#funnel"/></svg><span class="txt abs" style="left:829px;top:7px">(0)</span>
      <div class="btn" style="left:852px;top:2px"><svg class="i16"><use href="#magnifier"/></svg></div>
    </div>
    <div class="gh" id="cgh">
      <div class="hc" style="width:124px">Сотрудник<i class="sort"></i></div><div class="hc">Отдел/Группа</div><div class="hc">Телефон</div><div class="hc">IMEI</div><div class="hc">Серийный номер</div><div class="hc">Монитор</div><div class="hc">Статус</div>
    </div>
    <div id="cbody">
<div class="gr"><div class="gc">Васечкин Петр<br>Викторович</div><div class="gc">Группа<br>проектирования</div><div class="gc">+70000000003</div><div class="gc">01-332700-245377-9</div><div class="gc">245377</div><div class="gc">2.4.0.9998</div><div class="gc st"><svg class="i16 si"><use href="#s-android"/></svg><svg class="i16 si"><use href="#s-ant-g"/></svg><svg class="i16 si"><use href="#s-lock-r"/></svg><svg class="i16 si"><use href="#s-q"/></svg><svg class="i16 si"><use href="#s-tower"/></svg><svg class="i16 si"><use href="#s-sim-r"/></svg><br><svg class="i16 si"><use href="#s-minus-gray"/></svg><svg class="i16 si"><use href="#s-key"/></svg><svg class="i16 si"><use href="#s-person"/></svg><svg class="i16 si"><use href="#s-sim-g"/></svg><svg class="i16 si"><use href="#s-bat-y"/></svg></div></div>
<div class="gr alt"><div class="gc">Данилов Григорий<br>Павлович</div><div class="gc">Отдел разработки</div><div class="gc">+70000000002</div><div class="gc">01-332700-245376-1</div><div class="gc">245376</div><div class="gc">1.55.9999</div><div class="gc st"><svg class="i16 si"><use href="#s-apple"/></svg><svg class="i16 si"><use href="#s-ant-g"/></svg><svg class="i16 si"><use href="#s-unlock"/></svg><svg class="i16 si"><use href="#s-home"/></svg><svg class="i16 si"><use href="#s-phone"/></svg><svg class="i16 si"><use href="#s-sim-g"/></svg><br><svg class="i16 si"><use href="#s-check"/></svg><svg class="i16 si"><use href="#s-cube"/></svg><svg class="i16 si"><use href="#s-tie"/></svg><svg class="i16 si"><use href="#s-sim-g"/></svg><svg class="i16 si"><use href="#s-bat-y"/></svg></div></div>
<div class="gr hov"><div class="gc">Иванова Галина<br>Михайловна</div><div class="gc">Группа исполнения</div><div class="gc"></div><div class="gc">01-337201-445234-4</div><div class="gc">445234</div><div class="gc">2.4.0.9997</div><div class="gc st"><svg class="i16 si"><use href="#s-apple"/></svg><svg class="i16 si"><use href="#s-ant-r"/></svg><svg class="i16 si"><use href="#s-lock-r"/></svg><svg class="i16 si"><use href="#s-warn"/></svg><svg class="i16 si"><use href="#s-phone"/></svg><svg class="i16 si"><use href="#s-nosim"/></svg><br><svg class="i16 si"><use href="#s-minus-red"/></svg><svg class="i16 si"><use href="#s-cube"/></svg><svg class="i16 si"><use href="#s-person"/></svg><svg class="i16 si"><use href="#s-sim-g"/></svg><svg class="i16 si"><use href="#s-bat-g"/></svg></div></div>
<div class="gr alt"><div class="gc">Иванов Александр<br>Васильевич</div><div class="gc">Группа исполнения</div><div class="gc">+70000000020</div><div class="gc">01-269101-124334-4</div><div class="gc"></div><div class="gc">2.4.0.9995</div><div class="gc st"><svg class="i16 si"><use href="#s-win"/></svg><svg class="i16 si"><use href="#s-ant-g"/></svg><svg class="i16 si"><use href="#s-unlock"/></svg><svg class="i16 si"><use href="#s-q"/></svg><svg class="i16 si"><use href="#s-phone"/></svg><svg class="i16 si"><use href="#s-sim-r"/></svg><br><svg class="i16 si"><use href="#s-check"/></svg><svg class="i16 si"><use href="#s-cube"/></svg><svg class="i16 si"><use href="#s-tie"/></svg><svg class="i16 si"><use href="#s-sim-g"/></svg><svg class="i16 si"><use href="#s-bat-g"/></svg></div></div>
<div class="gr"><div class="gc">Николаев Фёдор<br>Федорович</div><div class="gc">Группа<br>проектирования</div><div class="gc">+70000000030</div><div class="gc">01-269101-124343-8</div><div class="gc"></div><div class="gc">1.0.0.9996</div><div class="gc st"><svg class="i16 si"><use href="#s-sail"/></svg><svg class="i16 si"><use href="#s-ant-r"/></svg><svg class="i16 si"><use href="#s-unlock"/></svg><svg class="i16 si"><use href="#s-q"/></svg><svg class="i16 si"><use href="#s-q"/></svg><svg class="i16 si"><use href="#s-sim-r"/></svg><br><svg class="i16 si"><use href="#s-check"/></svg><svg class="i16 si"><use href="#s-cube"/></svg><svg class="i16 si"><use href="#s-tie"/></svg><svg class="i16 si"><use href="#s-sim-g"/></svg><svg class="i16 si"><use href="#s-q"/></svg></div></div>
<div class="gr alt"><div class="gc">Павлов Валентин<br>Сергеевич</div><div class="gc">Группа<br>проектирования</div><div class="gc"></div><div class="gc"></div><div class="gc"></div><div class="gc"></div><div class="gc st"><svg class="i16 si"><use href="#s-shield"/></svg><svg class="i16 si"><use href="#s-ant-g"/></svg><svg class="i16 si"><use href="#s-unlock"/></svg><svg class="i16 si"><use href="#s-q"/></svg><svg class="i16 si"><use href="#s-q"/></svg><svg class="i16 si"><use href="#s-nosim"/></svg><br><svg class="i16 si"><use href="#s-check"/></svg><svg class="i16 si"><use href="#s-cube"/></svg><svg class="i16 si"><use href="#s-tie"/></svg><svg class="i16 si"><use href="#s-sim-g"/></svg><svg class="i16 si"><use href="#s-q"/></svg></div></div>
<div class="gr"><div class="gc">Павлов Сергей<br>Валентинович</div><div class="gc">Группа<br>проектирования</div><div class="gc"></div><div class="gc"></div><div class="gc"></div><div class="gc"></div><div class="gc st"><svg class="i16 si"><use href="#s-shield"/></svg><svg class="i16 si"><use href="#s-ant-g"/></svg><svg class="i16 si"><use href="#s-unlock"/></svg><svg class="i16 si"><use href="#s-q"/></svg><svg class="i16 si"><use href="#s-q"/></svg><svg class="i16 si"><use href="#s-nosim"/></svg><br><svg class="i16 si"><use href="#s-check"/></svg><svg class="i16 si"><use href="#s-cube"/></svg><svg class="i16 si"><use href="#s-tie"/></svg><svg class="i16 si"><use href="#s-sim-g"/></svg><svg class="i16 si"><use href="#s-q"/></svg></div></div>
<div class="gr alt"><div class="gc">Петров Василий<br>Федорович</div><div class="gc">ООО "Компания"</div><div class="gc">+375660000321</div><div class="gc">35-613403-287632-5</div><div class="gc"></div><div class="gc">2.4.0.9999</div><div class="gc st"><svg class="i16 si"><use href="#s-android"/></svg><svg class="i16 si"><use href="#s-ant-g"/></svg><svg class="i16 si"><use href="#s-unlock"/></svg><svg class="i16 si"><use href="#s-home"/></svg><svg class="i16 si"><use href="#s-tower"/></svg><svg class="i16 si"><use href="#s-sim-r"/></svg><br><svg class="i16 si"><use href="#s-check"/></svg><svg class="i16 si"><use href="#s-key"/></svg><svg class="i16 si"><use href="#s-tie"/></svg><svg class="i16 si"><use href="#s-sim-g"/></svg><svg class="i16 si"><use href="#s-bat-g"/></svg></div></div>
<div class="gr"><div class="gc">Сидоров Василий<br>Петрович</div><div class="gc">Группа<br>проектирования</div><div class="gc">+70000000010</div><div class="gc">35-853704-356733-7</div><div class="gc"></div><div class="gc">2.4.0.9996</div><div class="gc st"><svg class="i16 si"><use href="#s-tizen"/></svg><svg class="i16 si"><use href="#s-ant-g"/></svg><svg class="i16 si"><use href="#s-unlock"/></svg><svg class="i16 si"><use href="#s-home"/></svg><svg class="i16 si"><use href="#s-tower"/></svg><svg class="i16 si"><use href="#s-sim-r"/></svg><br><svg class="i16 si"><use href="#s-check"/></svg><svg class="i16 si"><use href="#s-cube"/></svg><svg class="i16 si"><use href="#s-person"/></svg><svg class="i16 si"><use href="#s-sim-g"/></svg><svg class="i16 si"><use href="#s-bat-g"/></svg></div></div>
<div class="gr alt"><div class="gc">Фёдоров Николай<br>Николаевич</div><div class="gc">Группа<br>проектирования</div><div class="gc"></div><div class="gc">01-269101-124343-8</div><div class="gc"></div><div class="gc">2.4.0.9996</div><div class="gc st"><svg class="i16 si"><use href="#s-tizen"/></svg><svg class="i16 si"><use href="#s-ant-g"/></svg><svg class="i16 si"><use href="#s-unlock"/></svg><svg class="i16 si"><use href="#s-home"/></svg><svg class="i16 si"><use href="#s-phone"/></svg><svg class="i16 si"><use href="#s-nosim"/></svg><br><svg class="i16 si"><use href="#s-check"/></svg><svg class="i16 si"><use href="#s-cube"/></svg><svg class="i16 si"><use href="#s-tie"/></svg><svg class="i16 si"><use href="#s-sim-g"/></svg><svg class="i16 si"><use href="#s-bat-g"/></svg></div></div>
    </div>
    <div class="tb" id="cbb">
      <div class="pgb" style="left:3px"><svg class="i16" style="opacity:.42"><use href="#pg-first"/></svg></div>
      <div class="pgb" style="left:27px"><svg class="i16" style="opacity:.42"><use href="#pg-prev"/></svg></div>
      <i class="sep" style="left:50px"></i>
      <span class="txt abs" style="left:58px;top:7px">Страница</span>
      <div class="inp" style="left:114px;top:3px;width:30px">1</div>
      <span class="txt abs" style="left:152px;top:7px">из 1</span>
      <i class="sep" style="left:179px"></i>
      <div class="pgb" style="left:183px"><svg class="i16" style="opacity:.42"><use href="#pg-next"/></svg></div>
      <div class="pgb" style="left:208px"><svg class="i16" style="opacity:.42"><use href="#pg-last"/></svg></div>
      <i class="sep" style="left:231px"></i>
      <svg class="i16 abs" style="left:237px;top:5px"><use href="#pg-refresh"/></svg>
      <span class="txt abs" style="left:616px;top:7px">Выгрузить</span>
      <span class="txt abs" style="left:681px;top:7px">Отображение 1 - 10 из 10</span>
      <div class="inp" style="left:818px;top:3px;width:41px">40</div>
      <div class="trig" style="left:860px;top:3px"><i></i></div>
    </div>
  </div>

  <div id="split"><b></b><i></i></div>

  <div id="right">
    <div class="tb" id="rtb">
      <div class="btn" style="left:212px;top:2px"><svg class="i16"><use href="#magnifier"/></svg></div>
      <div class="cbtn" style="left:241px;top:5px"><svg viewBox="0 0 14 14" width="13" height="12" style="display:block"><path d="M3 3.200l3.400 3.300L3 9.800M7.400 3.200l3.400 3.300-3.400 3.300" fill="none" stroke="#5a5a5a" stroke-width="1.300"/></svg></div>
    </div>
    <div class="tb" id="rtabs">
      <div id="tabgrp">
        <svg class="i16 abs" style="left:5px;top:5px"><use href="#t-user"/></svg><span class="txt abs" style="left:29px;top:7px">Сотрудник</span>
        <div class="pbtn" style="left:91px;top:2px;width:108px;height:22px"></div>
        <svg class="i16 abs" style="left:94px;top:5px"><use href="#gear"/></svg><span class="txt abs" style="left:118px;top:7px">Конфигурация</span>
      </div>
      <svg class="i16 abs" style="left:212px;top:8px"><use href="#save"/></svg><span class="txt abs" style="left:236px;top:10px">Сохранить</span>
    </div>
    <div class="gh" id="rgh">
      <div class="hc" style="width:138px">Параметр</div><div class="hc" style="width:61px">Заданное значение</div><div class="hc" style="width:62px;border-right:0">Примененное значение</div>
    </div>
    <div id="rbody">
<div class="pr"><div class="pc p1">Время ожидания ответа<br>сервера (с)</div><div class="pc p2">60</div><div class="pc p3"></div></div>
<div class="pr alt"><div class="pc p1">Длина очереди событий</div><div class="pc p2">20000</div><div class="pc p3"></div></div>
<div class="pr"><div class="pc p1">Запрет связи с<br>некорпоративными<br>абонентами</div><div class="pc p2">Нет</div><div class="pc p3"></div></div>
<div class="pr alt"><div class="pc p1">Интервал выдачи PING<br>со стороны клиента (с)</div><div class="pc p2">600</div><div class="pc p3"></div></div>
<div class="pr"><div class="pc p1">Количество старых лог-<br>файлов (шт.)</div><div class="pc p2">24</div><div class="pc p3"></div></div>
<div class="pr alt"><div class="pc p1">Номер телефона для<br>отправки SMS с<br>параметрами SIM</div><div class="pc p2"></div><div class="pc p3"></div></div>
<div class="pr"><div class="pc p1">Период опроса GPS<br>координат (с)</div><div class="pc p2">600</div><div class="pc p3"></div></div>
<div class="pr alt"><div class="pc p1">Период поиска точек<br>доступа</div><div class="pc p2">30</div><div class="pc p3"></div></div>
<div class="pr"><div class="pc p1">Период ротации логов<br>(с)</div><div class="pc p2">3600</div><div class="pc p3"></div></div>
<div class="pr alt"><div class="pc p1">Разрешить внешние SIM</div><div class="pc p2">Да</div><div class="pc p3"></div></div>
<div class="pr"><div class="pc p1">Разрешить<br>корпоративные SIM</div><div class="pc p2">Да</div><div class="pc p3"></div></div>
<div class="pr alt"><div class="pc p1">Разрешить работать без<br>SIM</div><div class="pc p2">Да</div><div class="pc p3"></div></div>
<div class="pr"><div class="pc p1">Уровень логирования</div><div class="pc p2">W</div><div class="pc p3"></div></div>
    </div>
    <div class="tb" id="rbb">
      <span class="txt abs" style="left:9px;top:7px">Установить значение по умолчанию</span>
      <span class="txt abs" style="left:209px;top:7px">Сбросить</span>
    </div>
  </div>
</div>

<div id="status">Версия: 4.4</div>
</body></html>
